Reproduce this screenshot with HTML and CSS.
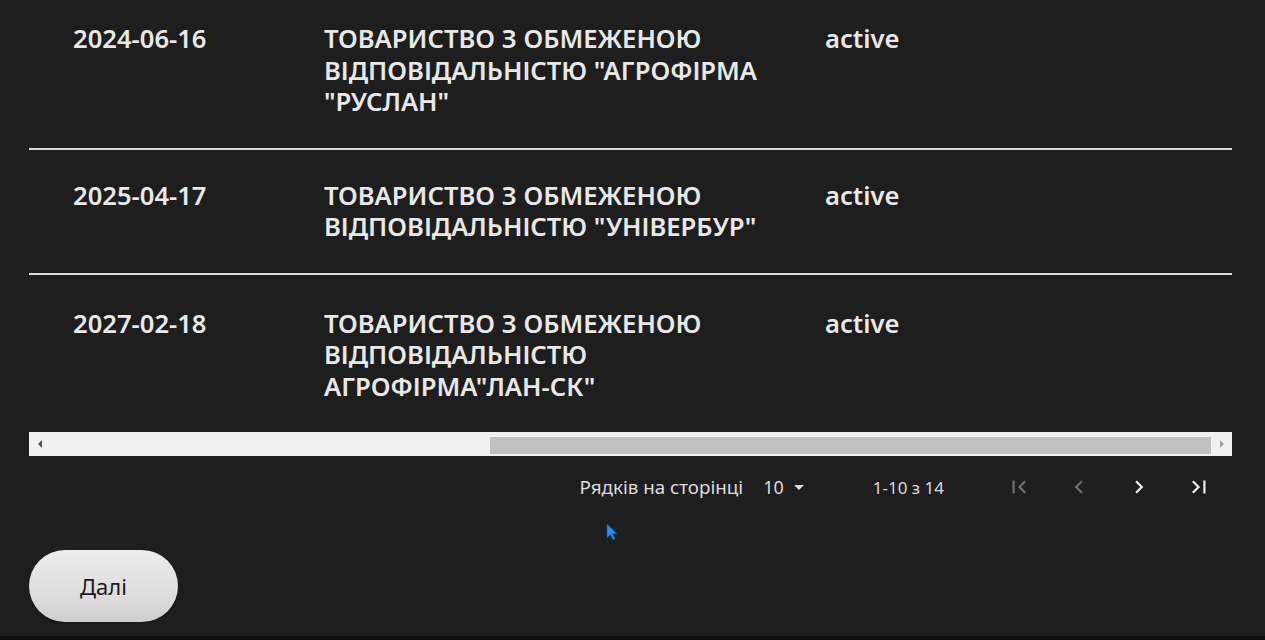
FILE: index.html
```html
<!DOCTYPE html>
<html lang="uk">
<head>
<meta charset="utf-8">
<title>Таблиця</title>
<link rel="stylesheet" href="styles.css">
</head>
<body>
<div class="page">
  <div class="table-wrap">
    <div class="table">
      <div class="row">
        <div class="cell c1">2024-06-16</div>
        <div class="cell c2">ТОВАРИСТВО З ОБМЕЖЕНОЮ ВІДПОВІДАЛЬНІСТЮ "АГРОФІРМА "РУСЛАН"</div>
        <div class="cell c3">active</div>
      </div>
      <div class="row">
        <div class="cell c1">2025-04-17</div>
        <div class="cell c2">ТОВАРИСТВО З ОБМЕЖЕНОЮ ВІДПОВІДАЛЬНІСТЮ "УНІВЕРБУР"</div>
        <div class="cell c3">active</div>
      </div>
      <div class="row last">
        <div class="cell c1">2027-02-18</div>
        <div class="cell c2">ТОВАРИСТВО З ОБМЕЖЕНОЮ ВІДПОВІДАЛЬНІСТЮ АГРОФІРМА"ЛАН-СК"</div>
        <div class="cell c3">active</div>
      </div>
    </div>
    <div class="hscroll">
      <span class="arrow-left"></span>
      <div class="track"><div class="thumb"></div></div>
      <span class="arrow-right"></span>
    </div>
  </div>

  <div class="pagination">
    <span class="rows-label">Рядків на сторінці</span>
    <span class="rows-select">10 <span class="caret"></span></span>
    <span class="range">1-10 з 14</span>
    <div class="nav">
      <button class="nav-btn disabled" aria-label="Перша сторінка">
        <svg width="24" height="24" viewBox="0 0 24 24"><path d="M18.41 16.59 13.82 12l4.59-4.59L17 6l-6 6 6 6zM6 6h2v12H6z" fill="currentColor"/></svg>
      </button>
      <button class="nav-btn disabled" aria-label="Попередня сторінка">
        <svg width="24" height="24" viewBox="0 0 24 24"><path d="M15.41 7.41 14 6l-6 6 6 6 1.41-1.41L10.83 12z" fill="currentColor"/></svg>
      </button>
      <button class="nav-btn" aria-label="Наступна сторінка">
        <svg width="24" height="24" viewBox="0 0 24 24"><path d="M10 6 8.59 7.41 13.17 12l-4.58 4.59L10 18l6-6z" fill="currentColor"/></svg>
      </button>
      <button class="nav-btn" aria-label="Остання сторінка">
        <svg width="24" height="24" viewBox="0 0 24 24"><path d="M5.59 7.41 10.18 12l-4.59 4.59L7 18l6-6-6-6zM16 6h2v12h-2z" fill="currentColor"/></svg>
      </button>
    </div>
  </div>

  <button class="next-btn">Далі</button>

  <svg class="cursor" width="12" height="18" viewBox="0 0 12 18"><path d="M1 1v14l3.5-3.5 2.5 5.5 2-1-2.5-5.3H11z" fill="#1e90ff" stroke="#0a4f9a" stroke-width="0.6"/></svg>
</div>
<div class="bottom-strip"></div>
</body>
</html>
```

FILE: styles.css
```css
html, body {
  margin: 0;
  padding: 0;
  background: #1e1e1e;
  height: 640px;
  overflow: hidden;
}

body {
  font-family: "Noto Sans", "Liberation Sans", Arial, sans-serif;
  color: #e6e6e6;
  position: relative;
}

.page {
  padding: 0 33px 0 29px;
  position: relative;
}

.table-wrap {
  width: 1203px;
  margin-top: -7px;
}

.row {
  display: grid;
  grid-template-columns: 251px 501px 1fr;
  padding: 30px 0;
  border-bottom: 2px solid #dcdcdc;
}

.row.last {
  border-bottom: none;
  padding-top: 33px;
  padding-bottom: 30px;
}

.cell {
  padding-left: 44px;
  font-size: 25.6px;
  font-weight: 600;
  line-height: 31.5px;
  color: #e8e8e8;
}

.c2 {
  padding-right: 4px;
}

.hscroll {
  display: flex;
  align-items: center;
  height: 24px;
  background: #f1f1f1;
}

.arrow-left, .arrow-right {
  height: 24px;
  display: flex;
  align-items: center;
  justify-content: center;
}

.arrow-left {
  width: 22px;
}

.arrow-right {
  width: 21px;
}

.arrow-left::before {
  content: "";
  border-right: 4px solid #505050;
  border-top: 4px solid transparent;
  border-bottom: 4px solid transparent;
}

.arrow-right::before {
  content: "";
  border-left: 4px solid #a3a3a3;
  border-top: 4px solid transparent;
  border-bottom: 4px solid transparent;
}

.track {
  flex: 1;
  height: 17px;
  margin-top: 3px;
  display: flex;
  justify-content: flex-end;
}

.thumb {
  width: 721px;
  height: 17px;
  background: #c1c1c1;
}

.pagination {
  display: flex;
  align-items: center;
  justify-content: flex-end;
  width: 1203px;
  height: 62px;
  font-size: 18px;
  color: #dcdcdc;
}

.rows-label {
  font-size: 18.8px;
}

.rows-select {
  margin-left: 20px;
  font-size: 18px;
  display: inline-flex;
  align-items: center;
  gap: 10px;
}

.caret {
  width: 0;
  height: 0;
  border-left: 5.5px solid transparent;
  border-right: 5.5px solid transparent;
  border-top: 5.5px solid #dcdcdc;
}

.range {
  margin-left: 69px;
  font-size: 17px;
}

.nav {
  display: flex;
  gap: 12px;
  margin-left: 51px;
  margin-right: 9px;
}

.nav-btn {
  width: 48px;
  height: 48px;
  display: flex;
  align-items: center;
  justify-content: center;
  background: none;
  border: none;
  padding: 0;
  color: #f0f0f0;
}

.nav-btn svg {
  width: 26px;
  height: 26px;
}

.nav-btn.disabled {
  color: #707070;
}

.next-btn {
  margin-top: 32px;
  width: 149px;
  height: 72px;
  border-radius: 36px;
  border: none;
  background: linear-gradient(180deg, #ececec 0%, #dedede 60%, #cfcfcf 100%);
  font-family: "Noto Sans", "Liberation Sans", Arial, sans-serif;
  font-size: 22px;
  color: #1a1a1a;
  box-shadow: 0 1px 2px rgba(0,0,0,0.4);
}

.cursor {
  position: absolute;
  left: 606px;
  top: 530px;
}

.bottom-strip {
  position: absolute;
  left: 0;
  right: 0;
  bottom: 0;
  height: 4px;
  background: #0d0d0d;
}
```
